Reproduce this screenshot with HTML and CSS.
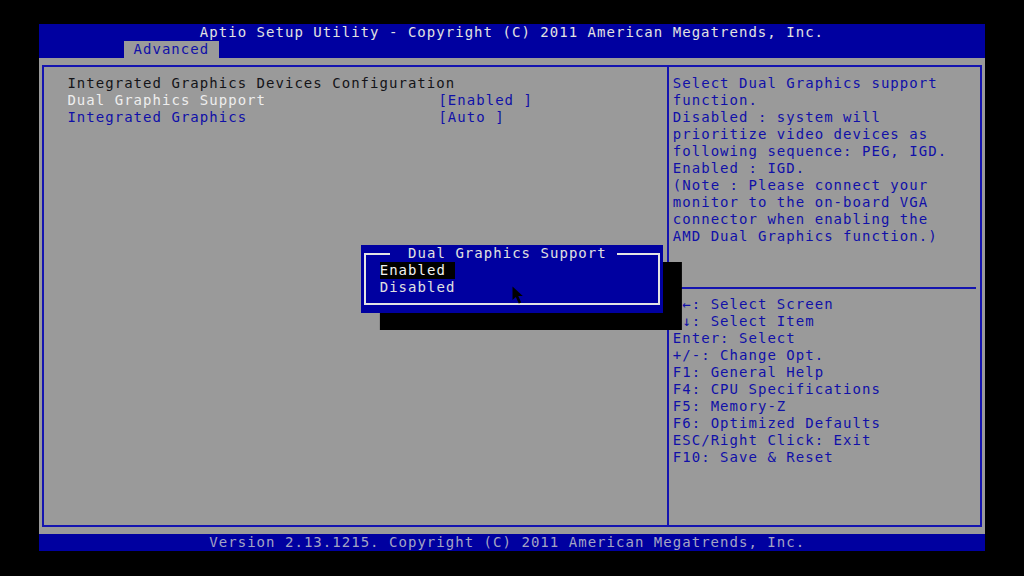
FILE: index.html
```html
<!DOCTYPE html>
<html lang="en">

<head>
  <meta charset="UTF-8">
  <meta name="viewport" content="width=device-width, initial-scale=1.0">
  <title>Aptio Setup Utility</title>
  <link rel="stylesheet" href="styles.css">
</head>

<body>
  <div class="screen">
    <div class="title-bar">Aptio Setup Utility - Copyright (C) 2011 American Megatrends, Inc.</div>
    <div class="tab-bar"><span class="tab">Advanced</span></div>

    <div class="main">
      <div class="frame">
        <div class="left-pane">
          <div class="row heading">Integrated Graphics Devices Configuration</div>
          <div class="row item selected">
            <span class="label">Dual Graphics Support</span><span class="value">[Enabled ]</span>
          </div>
          <div class="row item">
            <span class="label">Integrated Graphics</span><span class="value">[Auto ]</span>
          </div>
        </div>

        <div class="right-pane">
          <div class="help">
            <div class="row">Select Dual Graphics support</div>
            <div class="row">function.</div>
            <div class="row">Disabled : system will</div>
            <div class="row">prioritize video devices as</div>
            <div class="row">following sequence: PEG, IGD.</div>
            <div class="row">Enabled : IGD.</div>
            <div class="row">(Note : Please connect your</div>
            <div class="row">monitor to the on-board VGA</div>
            <div class="row">connector when enabling the</div>
            <div class="row">AMD Dual Graphics function.)</div>
          </div>
          <div class="divider"></div>
          <div class="keys">
            <div class="row">→←: Select Screen</div>
            <div class="row">↑↓: Select Item</div>
            <div class="row">Enter: Select</div>
            <div class="row">+/-: Change Opt.</div>
            <div class="row">F1: General Help</div>
            <div class="row">F4: CPU Specifications</div>
            <div class="row">F5: Memory-Z</div>
            <div class="row">F6: Optimized Defaults</div>
            <div class="row">ESC/Right Click: Exit</div>
            <div class="row">F10: Save &amp; Reset</div>
          </div>
        </div>
      </div>
    </div>

    <div class="footer">Version 2.13.1215. Copyright (C) 2011 American Megatrends, Inc.</div>

    <!-- option popup -->
    <div class="popup">
      <div class="popup-box">
        <span class="popup-title">Dual Graphics Support</span>
        <div class="row option active">Enabled</div>
        <div class="row option">Disabled</div>
      </div>
    </div>

    <svg class="cursor" width="15" height="19" viewBox="0 0 15 19">
      <path d="M0.5 0.5 L0.5 14 L3.8 11 L6.8 17.5 L9.2 16.4 L6.3 10 L10.8 10 Z" fill="#000" />
    </svg>
  </div>
</body>

</html>
```

FILE: styles.css
```css
body {
  margin: 0;
  background: #000;
  width: 1024px;
  height: 576px;
  overflow: hidden;
}

.screen {
  position: relative;
  margin: 24px 0 0 39px;
  width: 946px;
  height: 527px;
  font-family: "DejaVu Sans Mono", "Liberation Mono", monospace;
  font-size: 14px;
  letter-spacing: 1.03px;
  line-height: 17px;
  white-space: nowrap;
}

.row {
  height: 17px;
}

.title-bar {
  height: 17px;
  background: #0000a0;
  color: #e2e2e2;
  padding-left: 160.8px;
}

.tab-bar {
  height: 17px;
  background: #0000a0;
  padding-left: 85px;
}

.tab {
  display: inline-block;
  width: 94.6px;
  height: 17px;
  padding-left: 9.5px;
  box-sizing: border-box;
  background: #9a9a9a;
  color: #1010a8;
}

.main {
  height: 476px;
  background: #9a9a9a;
  padding: 7px 0 0 3px;
  box-sizing: border-box;
}

.frame {
  display: flex;
  width: 940px;
  height: 462px;
  border: 2px solid #1414b0;
  box-sizing: border-box;
}

.left-pane {
  flex: none;
  width: 625px;
  box-sizing: border-box;
  border-right: 2px solid #1414b0;
  padding: 8px 0 0 23.4px;
}

.heading {
  color: #141418;
}

.item {
  display: flex;
  color: #1010a8;
}

.item.selected .label {
  color: #eeeeee;
}

.label {
  width: 371px;
}

.value {
  white-space: pre;
}

.right-pane {
  flex: 1;
  padding: 8px 0 0 3.8px;
  color: #1010a8;
}

.divider {
  height: 2px;
  background: #1414b0;
  margin: 42px 4px 7px -3.8px;
}

.footer {
  height: 17px;
  background: #0000a0;
  color: #a4a4c4;
  padding-left: 170.3px;
}

.popup {
  position: absolute;
  left: 321.6px;
  top: 221px;
  width: 302.7px;
  height: 68px;
  padding: 8px 3px 8px 3.5px;
  box-sizing: border-box;
  background: #0000a0;
  box-shadow: 18.9px 17px 0 #000;
}

.popup-box {
  position: relative;
  height: 52px;
  border: 2px solid #e4e4e4;
  box-sizing: border-box;
  padding: 7px 0 0 13.6px;
  color: #e0e0e0;
}

.popup-title {
  position: absolute;
  left: 24px;
  top: -10px;
  padding: 0 10px 0 18px;
  background: #0000a0;
  color: #e0e0e0;
}

.option {
  width: 75.7px;
}

.option.active {
  background: #000;
  color: #f2f2f2;
}

.cursor {
  position: absolute;
  left: 473px;
  top: 262px;
}
```
